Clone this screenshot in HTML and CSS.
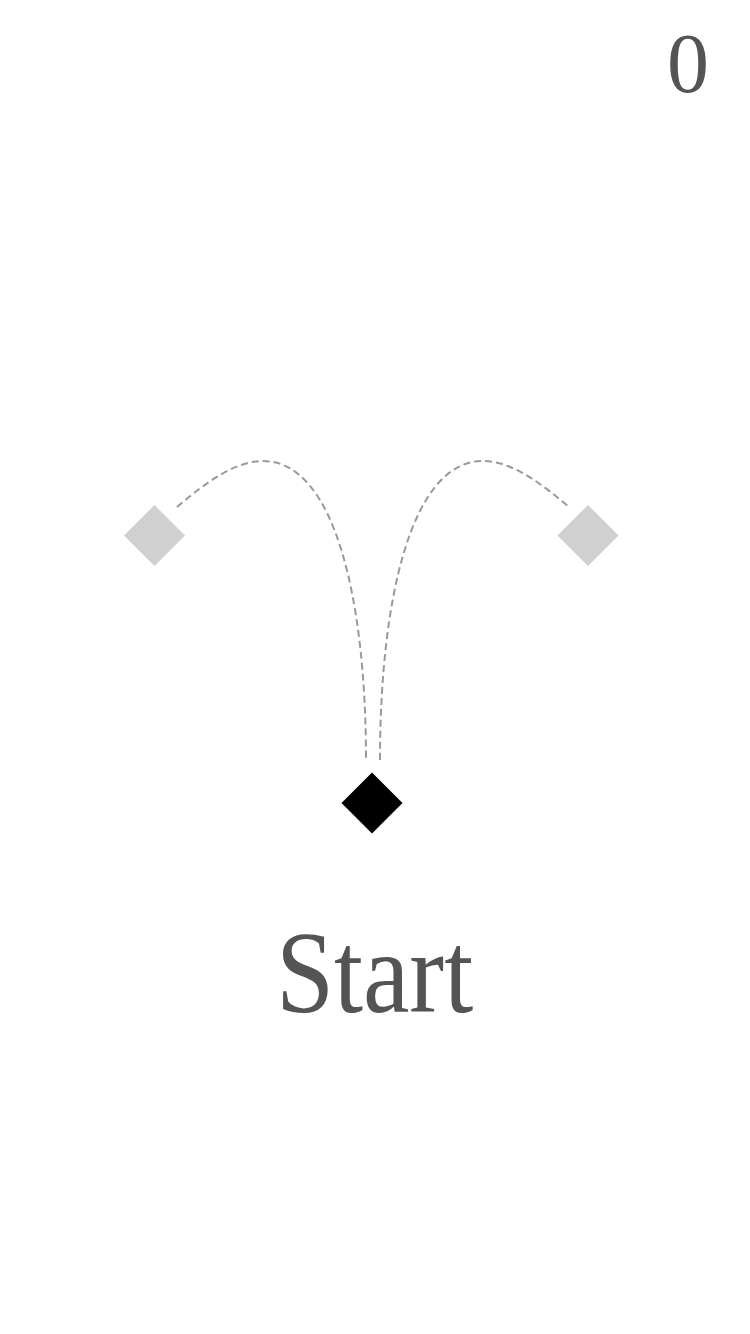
FILE: index.html
```html
<!DOCTYPE html>
<html lang="en">
<head>
<meta charset="utf-8">
<title>Start</title>
<link rel="stylesheet" href="styles.css">
</head>
<body>
<main class="page">
  <header class="top">
    <div class="score">0</div>
  </header>
  <svg class="stage" viewBox="0 106 750 807" width="750" height="807" xmlns="http://www.w3.org/2000/svg">
    <g class="paths" fill="none" stroke="#9a9a9a" stroke-width="2" stroke-dasharray="7 4">
      <path d="M177 507 C205 483 235 461 263 461 C335 461 366 600 366 760"/>
      <path d="M380 760 C380 600 411 461 483 461 C511 461 541 483 569 507"/>
    </g>
    <polygon points="154.5,505 185,535.5 154.5,566 124,535.5" fill="#d0d0d0"/>
    <polygon points="588,505 618.5,535.5 588,566 557.5,535.5" fill="#d0d0d0"/>
    <polygon points="372,772.5 402.5,803 372,833.5 341.5,803" fill="#000"/>
  </svg>
  <div class="start"><span class="start-label">Start</span></div>
</main>
</body>
</html>
```
FILE: styles.css
```css
html, body {
  margin: 0;
  padding: 0;
  background: #ffffff;
}

.page {
  width: 750px;
  height: 1334px;
  display: flex;
  flex-direction: column;
  font-family: "Liberation Serif", "DejaVu Serif", serif;
  color: #545454;
  overflow: hidden;
}

.top {
  display: flex;
  justify-content: flex-end;
  height: 106px;
  box-sizing: border-box;
  padding: 22px 41px 0 0;
}

.score {
  font-size: 84px;
  line-height: 84px;
}

.stage {
  display: block;
  width: 750px;
  height: 807px;
}

.start {
  display: flex;
  justify-content: center;
  font-size: 116px;
  line-height: 116px;
  padding-top: 2px;
}

.start-label {
  display: inline-block;
  transform: scaleX(0.9);
  transform-origin: center;
}
```
